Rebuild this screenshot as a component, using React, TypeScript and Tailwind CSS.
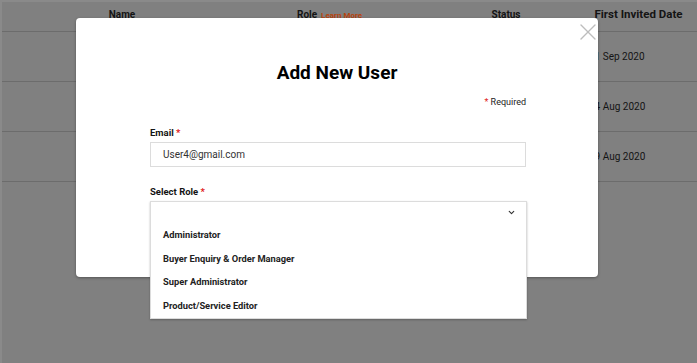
import { ChevronDown, X } from "lucide-react";

const roles = [
    "Administrator",
    "Buyer Enquiry & Order Manager",
    "Super Administrator",
    "Product/Service Editor",
];

const rows = ["01 Sep 2020", "24 Aug 2020", "19 Aug 2020"];

export default function App() {
    return (
        <div className="relative w-[697px] h-[363px] overflow-hidden bg-[#808080] border-l-2 border-t-2 border-[#8a8a8a] font-['Roboto',sans-serif] text-[#141414]">
            {/* table behind the overlay */}
            <div className="flex h-[29px] items-center pb-[4px] text-[10px] font-bold">
                <div className="w-[240px] text-center">Name</div>
                <div className="w-[190px] flex items-end gap-1 pl-[55px]">
                    Role <span className="text-[8px] text-[#b8440e]">Learn More</span>
                </div>
                <div className="w-[148px] text-center">Status</div>
                <div className="flex-1 text-center text-[11.5px]">First Invited Date</div>
            </div>
            {rows.map((d) => (
                <div key={d} className="flex h-[50px] items-center border-t-[1.5px] border-[#6c6c6c] text-[10px]">
                    <div className="w-[587px]" />
                    <div>{d}</div>
                </div>
            ))}
            <div className="border-t-[1.5px] border-[#6c6c6c]" />

            {/* modal */}
            <div className="absolute left-[74px] top-[16px] w-[522px] h-[259px] rounded bg-white shadow-[0_1px_3px_rgba(0,0,0,0.35)]">
                <X size={28} strokeWidth={1.2} className="absolute right-[-4px] top-0 text-[#bdbdbd]" />
                <h2 className="mt-[43px] text-center text-[19px] leading-6 font-bold text-black">Add New User</h2>
                <div className="ml-[74px] w-[377px]">
                    <p className="mt-[11px] pr-[1px] text-right text-[9px] leading-3 text-[#222]">
                        <span className="text-[#e02020]">*</span> Required
                    </p>
                    <label className="mt-[19px] block text-[9.5px] leading-3 font-bold">
                        Email <span className="text-[#e02020]">*</span>
                    </label>
                    <div className="mt-[3px] flex h-[25px] w-[376px] items-center border border-[#dcdcdc] px-3 text-[10px] text-[#333]">
                        User4@gmail.com
                    </div>
                    <label className="mt-[19px] block text-[9.5px] leading-3 font-bold">
                        Select Role <span className="text-[#e02020]">*</span>
                    </label>
                    <div className="mt-[3px] border border-[#dcdcdc] bg-white shadow-[0_1px_2px_rgba(0,0,0,0.25)]">
                        <div className="flex h-[21px] items-center justify-end pr-[10px]">
                            <ChevronDown size={9} strokeWidth={3} className="text-[#333]" />
                        </div>
                        <ul>
                            {roles.map((r) => (
                                <li key={r} className="flex h-[23.7px] items-center px-3 text-[9.3px] font-bold text-[#222]">
                                    {r}
                                </li>
                            ))}
                        </ul>
                    </div>
                </div>
            </div>
        </div>
    );
}
